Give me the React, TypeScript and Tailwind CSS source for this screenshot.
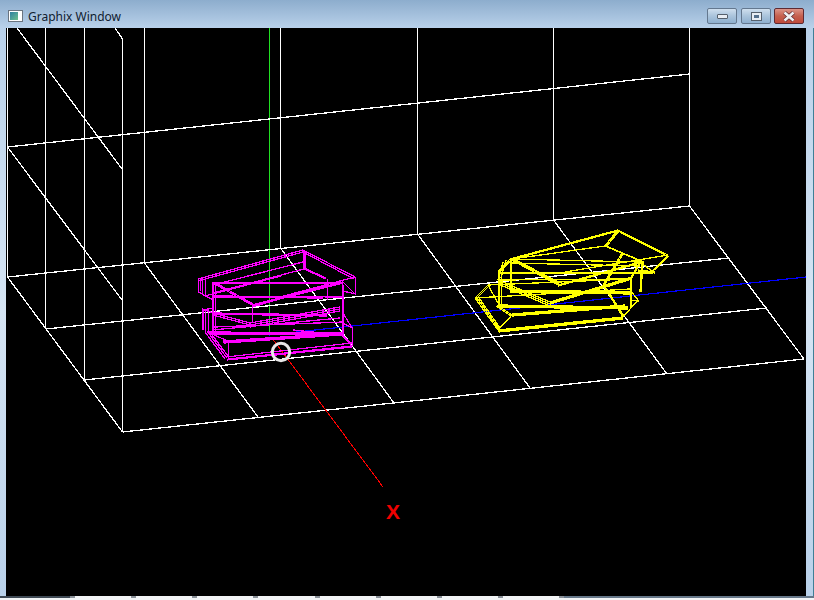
import React from 'react';

// wall and floor grid, page coordinates (viewBox is offset to the canvas origin)
const gridLines = [
  'M7.5 28V277', 'M45.5 28V329', 'M84.5 28V380', 'M122.5 39V432', 'M144.5 28V263', 'M280.5 28V248',
  'M417.5 28V234', 'M553.5 28V220', 'M689.5 28V206',
  'M7.5 147L689.5 74', 'M7.5 277L689.5 206', 'M45.5 329L729 258', 'M84.5 380L767 308', 'M122.5 432L804 359',
  'M17 28L122 169', 'M115 28L122.5 39', 'M7.5 147L122 300', 'M7.5 277L122.5 432',
  'M144.5 263L258 417', 'M280.5 248L394 403', 'M417.5 234L530 388', 'M553.5 220L667 374', 'M689.5 206L804 359',
];

const magentaLines = [
  // upper slab
  'M198 279L303 250L355 277', 'M198 281L303 252L354 279', 'M198.5 279V292L213 300', 'M200.5 278V291', 'M202.5 277V294', 'M205.5 276V296',
  'M303.5 250V269', 'M304.5 250V269', 'M305.5 251V269', 'M304 269L326 279', 'M304 268L326 278', 'M304 269L213 293',
  'M213 285L303 262', 'M205 296L281 276', 'M355 277L280 297', 'M355.5 277V294L343 291',
  'M213 282.5H343', 'M213 283.5H343', 'M213 283L252 305', 'M214 282L253 304', 'M252 305L343 282', 'M252 306L343 283', 'M252 307L325 286',
  // main box
  'M212.5 282V335', 'M213.5 282V335', 'M215.5 284V335', 'M342.5 282V335', 'M343.5 285V335',
  'M252.5 305V322', 'M213 297L323 298', 'M213 296L343 297', 'M327.5 279V300', 'M343 282L355 294',
  // lower layer
  'M202.5 310V330', 'M203.5 310V330', 'M205.5 309V332', 'M208.5 310V333', 'M202 310L214 308', 'M202 309L213 313', 'M213 313L327 315', 'M213 314L327 316',
  'M213 313L250 323', 'M213 315L250 325', 'M250 323L340 307', 'M250 325L340 309', 'M250 327L340 311',
  'M212 330L340 318', 'M214 327L343 322', 'M343 323L352.5 328V346', 'M343 313L352 328', 'M342 335L293 330',
  'M210 332L342 333', 'M210 333L342 334', 'M210 334L342 335', 'M223 341L342 333', 'M223 342L342 334', 'M224 343L342 335',
  'M214 335L228 341',
  // bottom slab
  'M228.5 341V359', 'M228 359L352 346', 'M227 360L352 347', 'M226 357L352 343', 'M205 332L225 359', 'M207 331L227 358', 'M209 331L228 356',
  'M340 333L352 346', 'M341 333L353 345',
];

const yellowLines = [
  // upper slab
  'M510 259L618 230L668 255', 'M510 260L618 231L667 256', 'M618 230L605 246', 'M617 231L604 247', 'M619 231L606 247',
  'M605 246L512 259', 'M605 246L643 262', 'M606 246L644 262', 'M668 255L565 272', 'M668 255L652 272', 'M669 256L653 271',
  'M510 259L498 272', 'M511 260L499 273', 'M512 259L501 271', 'M503 262L498 280', 'M506 260L501 278',
  'M640 262L653 272', 'M638 270L655 272', 'M638 271L655 273',
  // main box
  'M510 259L640 262', 'M510 263L640 266', 'M510 259L558 285', 'M511 258L559 284', 'M512 258L560 283', 'M558 285L640 262', 'M558 286L640 263',
  'M498.5 272V305', 'M499.5 272V305', 'M501.5 272V305', 'M510.5 259V291', 'M511.5 259V291',
  'M640 262L630.5 278V307', 'M641 262L631.5 278V307', 'M498 272.5H653', 'M498 273.5H653', 'M498 280L630 279',
  'M510 290L632 292', 'M510 291L632 293', 'M510 292L632 294', 'M642 262L640 292', 'M643 262L641 292',
  'M550 302L632 277', 'M550 303L632 278', 'M550 304L632 279', 'M498 280L550 302', 'M498 282L550 304', 'M498 284L550 306',
  'M603 285L622 253', 'M604 286L623 254',
  // lower layer
  'M475 298L488 285', 'M476 299L489 286', 'M488 285L630 279', 'M488 285L498 303', 'M475 298L498 330', 'M477 298L499 329', 'M479 298L500 328',
  'M475 298L630 289', 'M498 330L623 317', 'M498 331L623 318', 'M499 332L623 319',
  'M512 315L625 306', 'M512 316L625 307', 'M512 314L625 305', 'M512 315L497 305', 'M511 316L496 306', 'M512 315L499 329',
  'M498 305L628 307', 'M498 306L628 308', 'M498 307L628 309',
  'M623 317L638 300', 'M603 285L623 317', 'M604 285L624 316', 'M630 290L638 300', 'M630 300L639 301',
];

const bottomBits = [0, 1, 2, 3, 4, 5, 6, 7, 8];

const WindowButton = ({ close, children }: { close?: boolean; children: React.ReactNode }) => (
  <div
    className={`w-[30px] h-[16px] flex items-center justify-center rounded-[2px] border ${
      close
        ? 'border-[#5e2a32] bg-gradient-to-b from-[#dc9488] via-[#c5604e] to-[#c04a3a]'
        : 'border-[#64788f] bg-gradient-to-b from-[#cfdfee] via-[#aac4dc] to-[#8fb0cf]'
    }`}
  >
    {children}
  </div>
);

export default function App() {
  return (
    <div className="w-[814px] h-[600px] flex flex-col overflow-hidden bg-[#b9d1ea] font-['Noto_Sans','Open_Sans',sans-serif]">
      {/* Title bar */}
      <div className="h-[28px] shrink-0 flex items-start bg-gradient-to-b from-[#8dadcd] to-[#b9d1ea]">
        <div className="ml-[8px] mt-[10px] w-[15px] h-[12px] border border-[#6a7480] bg-white p-[1px]">
          <div className="w-[8px] h-full bg-gradient-to-br from-[#2f7fa0] to-[#6fc08a]" />
        </div>
        <span className="ml-[5px] mt-[8px] text-[12px] leading-[17px] text-[#10202f]">Graphix Window</span>
        <div className="ml-auto mr-[10px] mt-[8px] flex">
          <WindowButton>
            <div className="w-[11px] h-[5px] bg-[#e8edf3] border border-[#55606c] rounded-[1px]" />
          </WindowButton>
          <div className="w-[4px]" />
          <WindowButton>
            <div className="w-[11px] h-[9px] bg-[#e8edf3] border border-[#55606c] flex items-center justify-center">
              <div className="w-[5px] h-[3px] bg-[#55708c]" />
            </div>
          </WindowButton>
          <div className="w-[3px]" />
          <WindowButton close>
            <svg width="14" height="11" viewBox="0 0 14 11">
              <path d="M2.5 1.5L11.5 9.5M11.5 1.5L2.5 9.5" stroke="#5a2a30" strokeWidth="4" />
              <path d="M2.5 1.5L11.5 9.5M11.5 1.5L2.5 9.5" stroke="#f0f0f2" strokeWidth="2.6" />
            </svg>
          </WindowButton>
        </div>
      </div>

      {/* Client area */}
      <div className="flex-1 flex min-h-0 bg-gradient-to-b from-[#b9d1ea] via-[#d6e5f4] to-[#b9d1ea]">
        <div className="w-[6px] shrink-0" />
        <div className="relative w-[800px] bg-black">
          <svg className="w-full h-full block" viewBox="6 28 800 568" fill="none">
            <path d="M269.5 28V335" stroke="#22e022" shapeRendering="crispEdges" />
            <g stroke="#ffffff" strokeWidth="1.3" shapeRendering="crispEdges">
              {gridLines.map((d) => (
                <path key={d} d={d} />
              ))}
            </g>
            <path d="M269 335L806 277" stroke="#0000ff" strokeWidth="1.2" shapeRendering="crispEdges" />
            <path d="M272 338L383 487" stroke="#ff0000" shapeRendering="crispEdges" />
            <g stroke="#ff00ff" strokeWidth="1.3" shapeRendering="crispEdges">
              {magentaLines.map((d) => (
                <path key={d} d={d} />
              ))}
            </g>
            <g stroke="#ffff00" strokeWidth="1.3" shapeRendering="crispEdges">
              {yellowLines.map((d) => (
                <path key={d} d={d} />
              ))}
            </g>
            <circle cx="281" cy="352" r="8.7" stroke="#e8e8e8" strokeWidth="3" />
          </svg>
          <span className="absolute left-[380px] top-[472px] text-[21px] leading-[24px] font-bold text-[#f00000] font-['Liberation_Sans',sans-serif]">
            X
          </span>
        </div>
        <div className="flex-1 border-r border-[#3f7f96]" />
      </div>

      {/* Bottom edge of the window, with what shows through below it */}
      <div className="h-[4px] shrink-0 flex bg-[#f2f4f6]">
        <div className="w-[70px] h-[2px] bg-[#3f4a55]" />
        <div className="flex-1 flex justify-between">
          {bottomBits.map((bit) => (
            <div key={bit} className="w-[5px] h-[2px] bg-[#8a9199]" />
          ))}
        </div>
        <div className="w-[250px] h-[2px] bg-[#66788a]" />
      </div>
    </div>
  );
}
